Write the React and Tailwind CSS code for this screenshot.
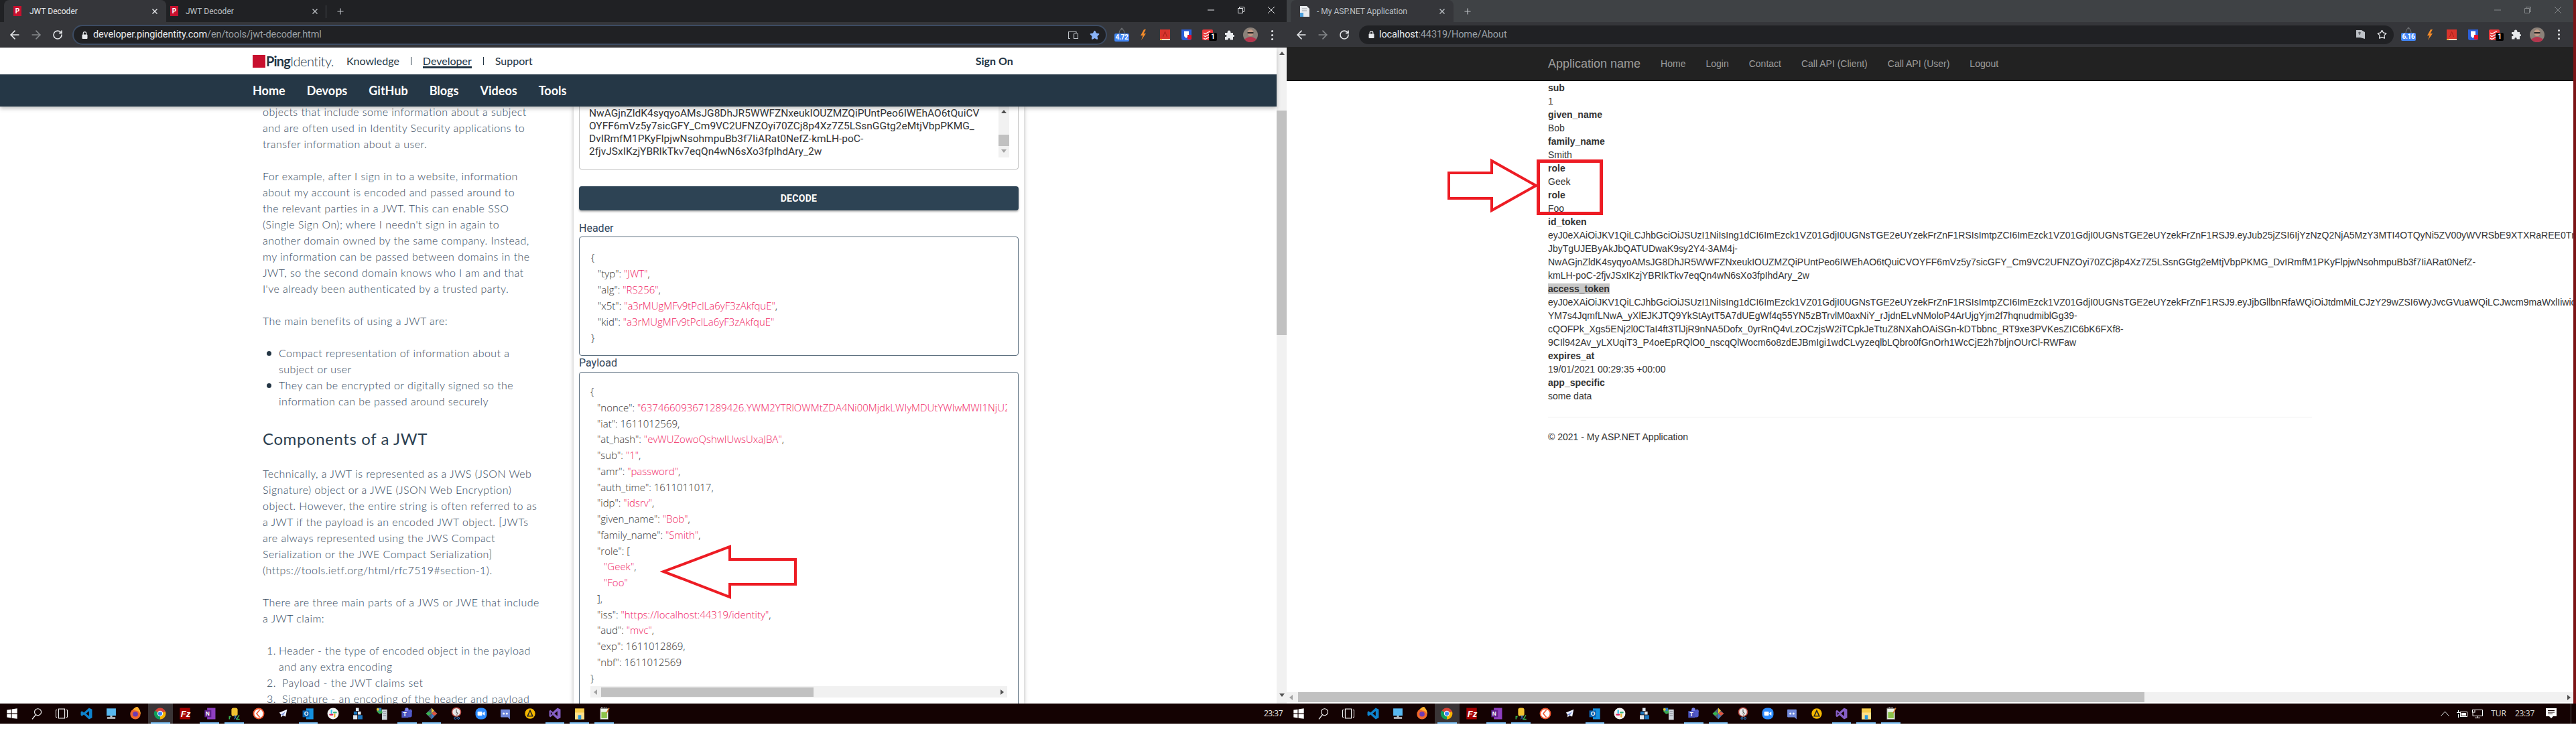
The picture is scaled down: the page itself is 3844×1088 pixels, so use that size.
import { ArrowLeft, ArrowRight, RotateCw, Star, Plus } from "lucide-react";

const bodyLines1 = [
  "objects that include some information about a subject",
  "and are often used in Identity Security applications to",
  "transfer information about a user.",
];
const bodyLines2 = [
  "For example, after I sign in to a website, information",
  "about my account is encoded and passed around to",
  "the relevant parties in a JWT. This can enable SSO",
  "(Single Sign On); where I needn't sign in again to",
  "another domain owned by the same company. Instead,",
  "my information can be passed between domains in the",
  "JWT, so the second domain knows who I am and that",
  "I've already been authenticated by a trusted party.",
];
const bodyLines3 = [
  "Technically, a JWT is represented as a JWS (JSON Web",
  "Signature) object or a JWE (JSON Web Encryption)",
  "object. However, the entire string is often referred to as",
  "a JWT if the payload is an encoded JWT object. [JWTs",
  "are always represented using the JWS Compact",
  "Serialization or the JWE Compact Serialization]",
  "(https://tools.ietf.org/html/rfc7519#section-1).",
];

const tokenLines = [
  "NwAGjnZldK4syqyoAMsJG8DhJR5WWFZNxeukIOUZMZQiPUntPeo6IWEhAO6tQuiCV",
  "OYFF6mVz5y7sicGFY_Cm9VC2UFNZOyi70ZCj8p4Xz7Z5LSsnGGtg2eMtjVbpPKMG_",
  "DvIRmfM1PKyFlpjwNsohmpuBb3f7IiARat0NefZ-kmLH-poC-",
  "2fjvJSxIKzjYBRIkTkv7eqQn4wN6sXo3fpIhdAry_2w",
];

const headerRows = [
  ["typ", "JWT", ","],
  ["alg", "RS256", ","],
  ["x5t", "a3rMUgMFv9tPclLa6yF3zAkfquE", ","],
  ["kid", "a3rMUgMFv9tPclLa6yF3zAkfquE", ""],
];

const idHead = "eyJ0eXAiOiJKV1QiLCJhbGciOiJSUzI1NiIsIng1dCI6ImEzck1VZ01GdjI0UGNsTGE2eUYzekFrZnF1RSIsImtpZCI6ImEzck1VZ01GdjI0UGNsTGE2eUYzekFrZnF1RSJ9.";

const profileRows = [
  ["sub", ["1"]],
  ["given_name", ["Bob"]],
  ["family_name", ["Smith"]],
  ["role", ["Geek"]],
  ["role", ["Foo"]],
  ["id_token", [
    idHead + "eyJub25jZSI6IjYzNzQ2NjA5MzY3MTI4OTQyNi5ZV00yWVRSbE9XTXRaREE0TmkwME1qZGtMV0l5TURVdFl6QXhOV01",
    "JbyTgUJEByAkJbQATUDwaK9sy2Y4-3AM4j-",
    "NwAGjnZldK4syqyoAMsJG8DhJR5WWFZNxeukIOUZMZQiPUntPeo6IWEhAO6tQuiCVOYFF6mVz5y7sicGFY_Cm9VC2UFNZOyi70ZCj8p4Xz7Z5LSsnGGtg2eMtjVbpPKMG_DvIRmfM1PKyFlpjwNsohmpuBb3f7IiARat0NefZ-",
    "kmLH-poC-2fjvJSxIKzjYBRIkTkv7eqQn4wN6sXo3fpIhdAry_2w",
  ]],
  ["access_token", [
    idHead + "eyJjbGllbnRfaWQiOiJtdmMiLCJzY29wZSI6WyJvcGVuaWQiLCJwcm9maWxlIiwicm9sZXMiLCJhcGkxIl0sInN1YiI6",
    "YM7s4JqmfLNwA_yXlEJKJTQ9YkStAytT5A7dUEgWf4q55YN5zBTrvlM0axNiY_rJjdnELvNMoloP4ArUjgYjm2f7hqnudmiblGg39-",
    "cQOFPk_Xgs5ENj2l0CTaI4ft3TlJjR9nNA5Dofx_0yrRnQ4vLzOCzjsW2iTCpkJeTtuZ8NXahOAiSGn-kDTbbnc_RT9xe3PVKesZIC6bK6FXf8-",
    "9CIl942Av_yLXUqiT3_P4oeEpRQlO0_nscqQlWocm6o8zdEJBmIgi1wdCLvyzeqlbLQbro0fGnOrh1WcCjE2h7bIjnOUrCl-RWFaw",
  ]],
  ["expires_at", ["19/01/2021 00:29:35 +00:00"]],
  ["app_specific", ["some data"]],
];

const Str = ({ children }) => <span className="text-[#f0225f]">"{children}"</span>;
const Key = ({ children }) => <span>"{children}": </span>;

function KV({ k, v, end = "," })
{
  return (
    <div className="pl-[10px]"><Key>{k}</Key>{typeof v === "number" ? v : <Str>{v}</Str>}{end}</div>
  );
}

function Favicon()
{
  return (
    <div className="w-[12px] h-[15px] bg-[#c8102e] flex items-center justify-center text-white text-[10px] font-bold [font-family:Roboto,sans-serif] shrink-0">P</div>
  );
}

function TabClose()
{
  return (
    <svg width="8" height="8" viewBox="0 0 8 8" className="shrink-0"><path d="M0.5 0.5 L7.5 7.5 M7.5 0.5 L0.5 7.5" stroke="currentColor" strokeWidth="1.4" /></svg>
  );
}

function WinControls({ dim })
{
  const c = dim ? "#85888b" : "#e8eaed";
  return (
    <div className="ml-auto flex items-center h-[30px] gap-[35px] pr-[18px]">
      <svg width="10" height="10" viewBox="0 0 10 10"><path d="M0 5 H10" stroke={c} strokeWidth="1" /></svg>
      <svg width="10" height="10" viewBox="0 0 10 10"><path d="M0.5 2.5 H7.5 V9.5 H0.5 Z M2.5 2.5 V0.5 H9.5 V7.5 H7.5" stroke={c} strokeWidth="1" fill="none" /></svg>
      <svg width="10" height="10" viewBox="0 0 10 10"><path d="M0 0 L10 10 M10 0 L0 10" stroke={c} strokeWidth="1" /></svg>
    </div>
  );
}

function LockIcon()
{
  return (
    <svg width="9" height="11" viewBox="0 0 9 11" className="shrink-0"><path d="M2.2 5 V3 a2.3 2.3 0 0 1 4.6 0 V5" stroke="#e8eaed" strokeWidth="1.2" fill="none" /><rect x="0.5" y="4.5" width="8" height="6.5" rx="1" fill="#e8eaed" /></svg>
  );
}

function Avatar()
{
  return (
    <svg width="22" height="22" viewBox="0 0 22 22">
      <circle cx="11" cy="11" r="11" fill="#8b8179" />
      <ellipse cx="11" cy="8" rx="4.5" ry="5" fill="#c49a86" />
      <rect x="6.5" y="7" width="9" height="2" fill="#222" />
      <path d="M2 18 Q11 10 20 18 Q16 22 11 22 Q6 22 2 18Z" fill="#b5354d" />
    </svg>
  );
}

function Extensions({ badge })
{
  return (
    <div className="flex items-center h-full w-[268px] pl-[6px] shrink-0">
      <div className="w-[32px] flex flex-col items-center">
        <svg width="14" height="9" viewBox="0 0 14 9" className="-mt-[2px]"><path d="M3 9 Q3.5 3 7 2 Q10.5 3 11 9" stroke="#6b6e72" strokeWidth="1.2" fill="none" /><circle cx="7" cy="2" r="1.5" fill="#6b6e72" /></svg>
        <div className="w-[22px] h-[12px] bg-[#4285f4] rounded-[2px] text-white text-[10px] leading-[12px] font-bold text-center [font-family:Roboto,sans-serif] tracking-[-0.3px]">{badge}</div>
      </div>
      <div className="w-[32px] flex justify-center">
        <svg width="10" height="16" viewBox="0 0 10 16"><path d="M6 0 L1 9 H4.5 L2 16 L9 6 H5.5 L9 0Z" fill="#f48b29" /></svg>
      </div>
      <div className="w-[32px] flex justify-center">
        <svg width="15" height="16" viewBox="0 0 15 16"><rect width="15" height="14" fill="#d8342c" /><rect y="14" width="15" height="2" fill="#f5d7c0" /><rect y="14" width="3" height="2" fill="#e8b93b" /><path d="M4.5 11 L7.5 3 L10.5 11" stroke="#a82018" strokeWidth="1" fill="none" /></svg>
      </div>
      <div className="w-[32px] flex justify-center">
        <svg width="15" height="16" viewBox="0 0 15 16"><path d="M0 0 H15 V13 Q15 16 12 16 H3 Q0 16 0 13Z" fill="#2b5fd9" /><path d="M4 2.5 H11 V9 L7 13 L4 10Z" fill="#fff" /><rect x="9" y="8" width="6" height="7" rx="1" fill="#e8112d" /></svg>
      </div>
      <div className="w-[32px] flex justify-center relative">
        <svg width="16" height="16" viewBox="0 0 16 16"><rect width="16" height="16" rx="2" fill="#e8383b" /><path d="M2 5 L4.5 6.5 L12 2.5 M2 9 L4.5 10.5 L12 6.5 M2 13 L4.5 14.5 L12 10.5" stroke="#fff" strokeWidth="1.4" fill="none" /></svg>
        <div className="absolute left-[18px] top-[5px] w-[12px] h-[12px] bg-black rounded-[2px] text-white text-[10px] leading-[12px] text-center font-bold [font-family:Roboto,sans-serif]">1</div>
      </div>
      <div className="w-[32px] flex justify-center">
        <svg width="15" height="15" viewBox="0 0 15 15"><path d="M1 4 H4.5 Q4.5 0.5 7 0.5 Q9.5 0.5 9.5 4 H13 V7 Q15 6.5 15 8.5 Q15 10.5 13 10 V14.5 H8.5 Q9 12 7 12 Q5 12 5.5 14.5 H1 V10 Q3.5 10.5 3.5 8.5 Q3.5 6.5 1 7Z" fill="#e8eaed" /></svg>
      </div>
      <div className="w-[32px] flex justify-center"><Avatar /></div>
      <div className="w-[32px] flex flex-col items-center gap-[3px]">
        <span className="w-[3px] h-[3px] rounded-full bg-[#e8eaed]" />
        <span className="w-[3px] h-[3px] rounded-full bg-[#e8eaed]" />
        <span className="w-[3px] h-[3px] rounded-full bg-[#e8eaed]" />
      </div>
    </div>
  );
}

function NavButtons()
{
  return (
    <div className="flex items-center pl-[6px] w-[108px] shrink-0 text-[#e8eaed]">
      <div className="w-[32px] flex justify-center"><ArrowLeft size={20} strokeWidth={2} /></div>
      <div className="w-[32px] flex justify-center text-[#85888b]"><ArrowRight size={20} strokeWidth={2} /></div>
      <div className="w-[32px] flex justify-center"><RotateCw size={16} strokeWidth={2.4} /></div>
    </div>
  );
}

function LeftWindow()
{
  return (
    <div className="w-[1920px] h-full flex flex-col shrink-0">
      <div className="h-[33px] bg-[#202124] flex items-start pl-[6px] text-[#e8eaed] [font-family:Roboto,sans-serif] text-[12px]">
        <div className="w-[242px] h-[33px] bg-[#35363a] rounded-t-[8px] flex items-center pl-[14px] pr-[13px]">
          <Favicon />
          <span className="ml-[12px] flex-1">JWT Decoder</span>
          <TabClose />
        </div>
        <div className="w-[238px] h-[33px] flex items-center pl-[6px] pr-[12px] text-[#bdc1c6]">
          <Favicon />
          <span className="ml-[11px] flex-1">JWT Decoder</span>
          <TabClose />
        </div>
        <span className="w-px h-[19px] mt-[8px] bg-[#4a4c50]" />
        <Plus size={14} className="ml-[14px] mt-[10px] text-[#bdc1c6]" />
        <WinControls />
      </div>
      <div className="h-[38px] bg-[#35363a] flex items-center">
        <NavButtons />
        <div className="flex-1 h-[30px] rounded-full bg-[#202124] border-2 border-[#3d4c63] flex items-center pl-[12px] pr-[9px] [font-family:Roboto,sans-serif] text-[14.5px] tracking-[-0.1px]">
          <LockIcon />
          <span className="ml-[8px] text-[#e8eaed]">developer.pingidentity.com</span>
          <span className="text-[#9aa0a6]">/en/tools/jwt-decoder.html</span>
          <svg width="15" height="11" viewBox="0 0 15 11" className="ml-auto mr-[17px]"><path d="M3 10.5 H0.5 V0.5 H12 V2 M8.5 3.5 H14.5 V10.5 H8.5Z" stroke="#bdc1c6" strokeWidth="1.2" fill="none" /></svg>
          <Star size={15} className="text-[#8ab4f8] fill-[#8ab4f8]" />
        </div>
        <Extensions badge="4.72" />
      </div>
      <div className="flex-1 flex min-h-0 bg-white">
        <div className="flex-1 flex flex-col min-w-0">
          <div className="relative z-10 shadow-[0_3px_6px_rgba(0,0,0,0.25)] [font-family:Lato,sans-serif]">
            <div className="h-[40px] bg-white flex items-center pl-[377px] text-[#233544] text-[16px]">
              <div className="w-[19px] h-[19px] bg-[#c8102e] shrink-0" />
              <span className="ml-px text-[20px] font-bold tracking-[-0.8px]">Ping</span>
              <span className="text-[20px] font-light tracking-[-0.5px]">Identity.</span>
              <span className="ml-[19px]">Knowledge</span>
              <span className="mx-[17px] w-px h-[12px] bg-[#233544]" />
              <span className="relative">Developer<span className="absolute left-0 right-0 top-[20px] h-[3px] bg-[#233544]" /></span>
              <span className="mx-[17px] w-px h-[12px] bg-[#233544]" />
              <span>Support</span>
              <span className="ml-[661px] font-bold">Sign On</span>
            </div>
            <div className="h-[48px] bg-[#253746] flex items-center pl-[377px] gap-[32px] text-white text-[18px] font-bold">
              <span>Home</span>
              <span>Devops</span>
              <span>GitHub</span>
              <span>Blogs</span>
              <span>Videos</span>
              <span>Tools</span>
            </div>
          </div>
          <div className="flex-1 flex min-h-0 overflow-hidden">
            <div className="ml-[392px] w-[464px] shrink-0 -mt-[4px] text-[#33475b] text-[16px] leading-[24px] font-light whitespace-nowrap [font-family:Lato,sans-serif] tracking-[0.45px]">
              {bodyLines1.map(l => <div key={l}>{l}</div>)}
              <div className="h-[24px]" />
              {bodyLines2.map(l => <div key={l}>{l}</div>)}
              <div className="h-[24px]" />
              <div>The main benefits of using a JWT are:</div>
              <div className="h-[24px]" />
              <ul className="pl-[24px]">
                <li className="relative"><span className="absolute -left-[18px] top-[9px] w-[7px] h-[7px] rounded-full bg-[#233544]" />Compact representation of information about a<br />subject or user</li>
                <li className="relative"><span className="absolute -left-[18px] top-[9px] w-[7px] h-[7px] rounded-full bg-[#233544]" />They can be encrypted or digitally signed so the<br />information can be passed around securely</li>
              </ul>
              <div className="mt-[24px] h-[40px] flex items-center text-[24px] font-normal text-[#2c4050] tracking-[0.6px]">Components of a JWT</div>
              <div className="h-[20px]" />
              {bodyLines3.map(l => <div key={l}>{l}</div>)}
              <div className="h-[24px]" />
              <div>There are three main parts of a JWS or JWE that include</div>
              <div>a JWT claim:</div>
              <div className="h-[24px]" />
              <ol className="pl-[24px]">
                <li className="relative"><span className="absolute -left-[18px]">1.</span>Header - the type of encoded object in the payload<br />and any extra encoding</li>
                <li className="relative"><span className="absolute -left-[18px]">2.</span><span className="pl-[5px]">Payload - the JWT claims set</span></li>
                <li className="relative"><span className="absolute -left-[18px]">3.</span><span className="pl-[5px]">Signature - an encoding of the header and payload</span></li>
              </ol>
            </div>
            <div className="w-[672px] shrink-0 px-[8px] bg-white shadow-[0_0_6px_rgba(0,0,0,0.3)] [font-family:Roboto,sans-serif]">
              <div className="h-[94px] border-x border-b border-[#c4c4c4] rounded-b-[4px] relative pl-[14px] pt-px text-[15.5px] leading-[19px] text-[#333] whitespace-nowrap">
                {tokenLines.map(l => <div key={l}>{l}</div>)}
                <div className="absolute right-[13px] top-0 w-[16px] h-[76px] bg-[#f1f1f1] flex flex-col items-center">
                  <span className="mt-[5px] w-0 h-0 border-x-[4px] border-x-transparent border-b-[5px] border-b-[#505050]" />
                  <span className="mt-[32px] w-full h-[17px] bg-[#c1c1c1]" />
                  <span className="mt-[5px] w-0 h-0 border-x-[4px] border-x-transparent border-t-[5px] border-t-[#a3a3a3]" />
                </div>
              </div>
              <div className="mt-[25px] h-[36px] rounded-[4px] bg-[#2d4354] shadow-[0_2px_3px_rgba(0,0,0,0.3)] flex items-center justify-center text-white text-[14px] font-bold tracking-[0.3px]">DECODE</div>
              <div className="mt-[15px] h-[24px] leading-[24px] text-[16px] text-[#33475b]">Header</div>
              <div className="h-[178px] border border-[#5c6f7f] rounded-[4px] pt-[18px] pl-[17px] text-[15px] leading-[24px] text-[#333] font-light [font-family:'Open_Sans',sans-serif]">
                <div>{"{"}</div>
                {headerRows.map(r => <KV key={r[0]} k={r[0]} v={r[1]} end={r[2]} />)}
                <div>{"}"}</div>
              </div>
              <div className="h-[24px] leading-[22px] text-[16px] text-[#33475b]">Payload</div>
              <div className="border border-[#5c6f7f] rounded-[4px] h-[520px] pt-[17px] px-[16px] text-[15px] leading-[23.75px] text-[#333] font-light [font-family:'Open_Sans',sans-serif]">
                <div className="overflow-hidden whitespace-nowrap">
                  <div>{"{"}</div>
                  <KV k="nonce" v="637466093671289426.YWM2YTRlOWMtZDA4Ni00MjdkLWIyMDUtYWIwMWI1NjU2" />
                  <KV k="iat" v={1611012569} />
                  <KV k="at_hash" v="evWUZowoQshwIUwsUxaJBA" />
                  <KV k="sub" v="1" />
                  <KV k="amr" v="password" />
                  <KV k="auth_time" v={1611011017} />
                  <KV k="idp" v="idsrv" />
                  <KV k="given_name" v="Bob" />
                  <KV k="family_name" v="Smith" />
                  <div className="pl-[10px]"><Key>role</Key>[</div>
                  <div className="pl-[20px]"><Str>Geek</Str>,</div>
                  <div className="pl-[20px]"><Str>Foo</Str></div>
                  <div className="pl-[10px]">],</div>
                  <KV k="iss" v="https://localhost:44319/identity" />
                  <KV k="aud" v="mvc" />
                  <KV k="exp" v={1611012869} />
                  <KV k="nbf" v={1611012569} end="" />
                  <div>{"}"}</div>
                </div>
                <div className="h-[17px] bg-[#f1f1f1] flex items-center">
                  <span className="ml-[5px] w-0 h-0 border-y-[4px] border-y-transparent border-r-[5px] border-r-[#a3a3a3]" />
                  <span className="ml-[6px] w-[317px] h-[14px] bg-[#c1c1c1]" />
                  <span className="ml-auto mr-[5px] w-0 h-0 border-y-[4px] border-y-transparent border-l-[5px] border-l-[#505050]" />
                </div>
              </div>
            </div>
          </div>
        </div>
        <div className="w-[15px] bg-[#f1f1f1] flex flex-col items-center shrink-0">
          <span className="mt-[6px] w-0 h-0 border-x-[4px] border-x-transparent border-b-[5px] border-b-[#505050]" />
          <span className="mt-[83px] w-full h-[335px] bg-[#c1c1c1]" />
          <span className="mt-auto mb-[10px] w-0 h-0 border-x-[4px] border-x-transparent border-t-[5px] border-t-[#505050]" />
        </div>
      </div>
    </div>
  );
}

function RightWindow()
{
  return (
    <div className="w-[1920px] h-full flex flex-col shrink-0">
      <div className="h-[33px] bg-[#3f4245] flex items-start pl-[6px] text-[#bdc1c6] [font-family:Roboto,sans-serif] text-[12px]">
        <div className="w-[243px] h-[33px] bg-[#35363a] rounded-t-[8px] flex items-center pl-[13px] pr-[13px]">
          <svg width="16" height="16" viewBox="0 0 16 16" className="shrink-0"><path d="M1 0 H11 L15 4 V16 H1Z" fill="#e8eaed" /><path d="M1 10 H6 V16 H1Z" fill="#4a9edb" /><path d="M4 4 H11 M4 7 H11" stroke="#9aa0a6" /></svg>
          <span className="ml-[10px] flex-1">- My ASP.NET Application</span>
          <TabClose />
        </div>
        <Plus size={14} className="ml-[14px] mt-[10px] text-[#bdc1c6]" />
        <WinControls dim />
      </div>
      <div className="h-[37px] bg-[#35363a] flex items-center">
        <NavButtons />
        <div className="flex-1 h-[28px] rounded-full bg-[#202124] flex items-center pl-[14px] pr-[10px] [font-family:Roboto,sans-serif] text-[14.5px] tracking-[-0.1px]">
          <LockIcon />
          <span className="ml-[7px] text-[#e8eaed]">localhost</span>
          <span className="text-[#9aa0a6]">:44319/Home/About</span>
          <svg width="14" height="13" viewBox="0 0 14 13" className="ml-auto mr-[17px]"><path d="M0 0 H8 L13 3 V13 L6 11 H0Z" fill="#bdc1c6" /><path d="M3 4 H7 M5 2.5 V7" stroke="#35363a" /></svg>
          <Star size={15} className="text-[#e8eaed]" />
        </div>
        <Extensions badge="6.16" />
      </div>
      <div className="flex-1 flex flex-col min-h-0 bg-white [font-family:'Liberation_Sans',sans-serif]">
        <div className="h-[51px] bg-[#222] border-b border-black flex items-center pl-[390px] text-[#9d9d9d] text-[14px] shrink-0">
          <span className="text-[18px] mr-[15px]">Application name</span>
          <span className="px-[15px]">Home</span>
          <span className="px-[15px]">Login</span>
          <span className="px-[15px]">Contact</span>
          <span className="px-[15px]">Call API (Client)</span>
          <span className="px-[15px]">Call API (User)</span>
          <span className="px-[15px]">Logout</span>
        </div>
        <div className="flex-1 min-h-0 overflow-hidden pl-[390px] text-[14px] leading-[20px] text-[#333] whitespace-nowrap">
          {profileRows.map(([name, values], i) => (
            <div key={i}>
              <div className="font-bold"><span className={name === "access_token" ? "bg-[#c8c8c8]" : ""}>{name}</span></div>
              {values.map(v => <div key={v}>{v}</div>)}
            </div>
          ))}
          <div className="mt-[21px] w-[1140px] border-t border-[#eee]" />
          <div className="mt-[19px]">© 2021 - My ASP.NET Application</div>
        </div>
        <div className="h-[15px] bg-[#f1f1f1] flex items-center shrink-0">
          <span className="ml-[4px] w-0 h-0 border-y-[4px] border-y-transparent border-r-[5px] border-r-[#a3a3a3]" />
          <span className="ml-[8px] w-[1263px] h-full bg-[#c1c1c1]" />
          <span className="ml-auto mr-[4px] w-0 h-0 border-y-[4px] border-y-transparent border-l-[5px] border-l-[#505050]" />
        </div>
        <div className="h-[2px] bg-white shrink-0" />
      </div>
    </div>
  );
}

const S = ({ children }) => <svg width="20" height="20" viewBox="0 0 26 26">{children}</svg>;

const taskIcons = [
  <S key="win"><path d="M3 6 L11 4.8 V12.5 H3Z M12.5 4.6 L23 3 V12.5 H12.5Z M3 14 H11 V21.5 L3 20.3Z M12.5 14 H23 V23 L12.5 21.7Z" fill="#fff" /></S>,
  <S key="search"><circle cx="15" cy="10" r="6.5" stroke="#fff" strokeWidth="1.4" fill="none" /><path d="M11 15 L4 24" stroke="#fff" strokeWidth="1.6" /></S>,
  <S key="task"><rect x="7" y="4" width="12" height="18" stroke="#fff" strokeWidth="1.4" fill="none" /><path d="M4 6 H2 V20 H4 M22 6 H24 V20 H22" stroke="#fff" strokeWidth="1.3" fill="none" /></S>,
  <S key="code"><path d="M18 2 L24 5 V21 L18 24 L8 15 L4 18 L2 16 V10 L4 8 L8 11Z M18 8 L12 13 L18 18Z" fill="#0e83cd" fillRule="evenodd" /></S>,
  <S key="pc"><rect x="4" y="3" width="18" height="14" fill="#58b8f0" /><rect x="11" y="17" width="4" height="3" fill="#b9c4cc" /><rect x="5" y="20" width="16" height="3" fill="#d8dee3" /></S>,
  <S key="firefox"><circle cx="13" cy="14" r="10" fill="#f0672b" /><path d="M8 5 Q16 -3 19 2 Q24 8 23 14 Q20 7 14 7Z" fill="#ffb02e" /><circle cx="13" cy="14" r="5" fill="#6e3bb5" /></S>,
  <S key="chrome"><circle cx="13" cy="13" r="11" fill="#db4437" /><path d="M13 13 L3 7 A11 11 0 0 0 13 24Z" fill="#0f9d58" /><path d="M13 13 L23 9 A11 11 0 0 1 13 24Z" fill="#f4b400" /><circle cx="13" cy="13" r="5.4" fill="#fff" /><circle cx="13" cy="13" r="4" fill="#4285f4" /></S>,
  <S key="fz"><rect x="3" y="2" width="20" height="22" fill="#a80000" /><text x="5" y="20" fontSize="17" fontWeight="700" fontStyle="italic" fill="#fff" fontFamily="Liberation Sans">Fz</text></S>,
  <S key="one"><rect x="8" y="2" width="16" height="22" fill="#8f3fc0" /><rect x="3" y="6" width="13" height="14" fill="#5e1f8c" /><text x="5" y="17" fontSize="11" fontWeight="700" fill="#fff" fontFamily="Liberation Sans">N</text></S>,
  <S key="cap"><rect x="7" y="2" width="12" height="16" rx="4" fill="#f2c230" /><path d="M3 24 V19 H6 M23 24 H17 L22 16" stroke="#37b24d" strokeWidth="2" fill="none" /><path d="M12 16 L17 24 M17 16 L12 24" stroke="#2e6fb7" strokeWidth="1.5" /></S>,
  <S key="git"><circle cx="13" cy="13" r="11" fill="#f0562e" /><circle cx="13" cy="13" r="8.5" fill="#fff" /><path d="M15 6 L9 13 L15 20" stroke="#f0562e" strokeWidth="2" fill="none" /></S>,
  <S key="mail"><path d="M5 11 L20 5 L17 19 L12 17 L8 20 L8 15Z" fill="#eef2ff" /><path d="M8 15 L17 9 L12 17" fill="#7b8fd6" /></S>,
  <S key="out"><rect x="9" y="3" width="14" height="21" fill="#1490df" /><rect x="2" y="7" width="13" height="13" fill="#0a5ea8" /><text x="5" y="17.5" fontSize="11" fontWeight="700" fill="#fff" fontFamily="Liberation Sans">O</text></S>,
  <S key="slack"><circle cx="13" cy="13" r="11" fill="#f4f4f4" /><path d="M10 7 V12" stroke="#36c5f0" strokeWidth="3" strokeLinecap="round" /><path d="M14.5 11 H19" stroke="#2eb67d" strokeWidth="3" strokeLinecap="round" /><path d="M16 14.5 V19" stroke="#ecb22e" strokeWidth="3" strokeLinecap="round" /><path d="M7 15 H12" stroke="#e01e5a" strokeWidth="3" strokeLinecap="round" /></S>,
  <S key="blocks"><rect x="9" y="2" width="6" height="6" fill="#dfe7ee" /><rect x="5" y="9" width="7" height="6" fill="#1c75bc" /><rect x="13" y="9" width="6" height="6" fill="#dfe7ee" /><rect x="4" y="16" width="8" height="8" fill="#dfe7ee" /><rect x="13" y="16" width="9" height="8" fill="#1c75bc" /></S>,
  <S key="srv"><rect x="13" y="5" width="10" height="20" fill="#cfd6dc" /><path d="M15 9 H21 M15 13 H21 M15 17 H21" stroke="#667" /><path d="M3 2 L12 3 L14 12 L8 14 L3 9Z" fill="#3aa655" /><path d="M6 2 L12 2 L11 8 L6 7Z" fill="#2e7dd1" /><circle cx="5" cy="5" r="2.5" fill="#f2c230" /></S>,
  <S key="teams"><circle cx="20" cy="8" r="3" fill="#7b83eb" /><rect x="8" y="6" width="15" height="14" rx="3" fill="#5059c9" /><circle cx="13" cy="5" r="3.5" fill="#7b83eb" /><rect x="3" y="8" width="13" height="13" fill="#4b53bc" /><text x="6" y="18.5" fontSize="11" fontWeight="700" fill="#fff" fontFamily="Liberation Sans">T</text></S>,
  <S key="kraken"><path d="M13 2 L24 13 L13 24 L2 13Z" fill="#4e5d78" /><path d="M13 2 L18 7 L13 13Z" fill="#f2c230" /><path d="M2 13 L7 9 L13 13 L7 17Z" fill="#37b24d" /><path d="M24 13 L18 17 L13 13 L18 9Z" fill="#e0533d" /><path d="M13 13 L18 18 L13 24Z" fill="#3d7dca" /></S>,
  <S key="snip"><circle cx="13" cy="10" r="8.5" fill="#e8e8e8" stroke="#b7463f" strokeWidth="2" /><path d="M13 5 V10 L16 13" stroke="#555" strokeWidth="1.4" fill="none" /><circle cx="11" cy="22" r="2" stroke="#2e7dd1" strokeWidth="1.3" fill="none" /><circle cx="17" cy="22" r="2" stroke="#2e7dd1" strokeWidth="1.3" fill="none" /><path d="M12 20 L16 12 M16 20 L12 12" stroke="#888" /></S>,
  <S key="zoom"><rect x="2" y="2" width="22" height="22" rx="9" fill="#2d8cff" /><rect x="6" y="9" width="9" height="8" rx="1.5" fill="#fff" /><path d="M16 12 L20 9 V17 L16 14Z" fill="#fff" /></S>,
  <S key="disc"><path d="M5 5 H21 Q22 5 22 6 V24 L18 20 H5 Q4 20 4 19 V6 Q4 5 5 5Z" fill="#7289da" /><circle cx="10" cy="13" r="2" fill="#fff" /><circle cx="16" cy="13" r="2" fill="#fff" /></S>,
  <S key="amd"><circle cx="13" cy="13" r="10" fill="#f5b700" /><path d="M13 7 L18 18 H8Z" stroke="#222" strokeWidth="2" fill="none" /></S>,
  <S key="vs"><path d="M18 2 L24 5 V21 L18 24 L9 16 L4 20 L2 18 V8 L4 6 L9 10Z M18 8 L12 13 L18 18Z M5 10 V16 L8 13Z" fill="#865fc5" fillRule="evenodd" /></S>,
  <S key="folder"><path d="M4 3 H22 V24 H4Z" fill="#f7cc4a" /><path d="M4 11 H22 V24 H4Z" fill="#ffe08a" /><rect x="10" y="16" width="6" height="8" fill="#2b9be0" /></S>,
  <S key="note"><rect x="5" y="3" width="15" height="21" fill="#eef3ea" stroke="#777" /><rect x="7" y="10" width="11" height="12" fill="#8bc34a" /><path d="M7 3 V0 M10 3 V0 M13 3 V0 M16 3 V0" stroke="#ccc" /><path d="M22 2 L17 12" stroke="#d9772b" strokeWidth="2" /></S>,
];

const activeBars = [7, 9, 10, 13, 17, 18, 23, 24, 25];

function TaskIcons()
{
  return (
    <div className="flex h-full">
      {taskIcons.map((icon, i) => (
        <div key={i} className={"w-[36.8px] h-full relative flex items-center justify-center " + (i === 6 ? "bg-[#3a3436]" : "")}>
          {icon}
          {activeBars.includes(i + 1) && <span className="absolute left-[4px] right-[4px] bottom-0 h-[2px] bg-[#76b9ed]" />}
        </div>
      ))}
    </div>
  );
}

export default function App()
{
  return (
    <div className="relative w-[3844px] h-[1088px] flex flex-col bg-white overflow-hidden">
      <div className="h-[1050px] flex">
        <LeftWindow />
        <RightWindow />
        <div className="w-[4px] bg-[#7b1416]" />
      </div>
      <div className="h-[30px] bg-[#140202] flex text-white [font-family:'Open_Sans',sans-serif] text-[12px]">
        <div className="w-[1920px] flex justify-between pr-[6px] shrink-0">
          <TaskIcons />
          <div className="flex items-center text-[#eee] tracking-[-0.5px]">23:37</div>
        </div>
        <div className="flex-1 flex">
          <TaskIcons />
          <div className="ml-auto flex items-center pr-[7px] text-[#ddd]">
            <svg width="13" height="8" viewBox="0 0 13 8"><path d="M0.5 7.5 L6.5 1 L12.5 7.5" stroke="#ddd" strokeWidth="1" fill="none" /></svg>
            <svg width="16" height="11" viewBox="0 0 16 11" className="ml-[11px]"><rect x="5.5" y="2.5" width="10" height="7" stroke="#fff" fill="none" /><rect x="7" y="4" width="7" height="4" fill="#fff" /><path d="M0 3.5 H5 M2.5 0 V3.5 M2.5 6 V11" stroke="#fff" /></svg>
            <svg width="16" height="13" viewBox="0 0 16 13" className="ml-[7px]"><path d="M4 0.5 H15.5 V9.5 H1 V4 M8 9.5 V12 M4 12.5 H12" stroke="#fff" fill="none" /><rect x="0.5" y="0.5" width="3.5" height="3.5" stroke="#fff" fill="#140202" /></svg>
            <span className="ml-[12px]">TUR</span>
            <span className="ml-[13px] tracking-[-0.3px]">23:37</span>
            <svg width="16" height="16" viewBox="0 0 16 16" className="ml-[17px]"><path d="M0 0 H16 V12 H11 L8 15 L5 12 H0Z" fill="#fff" /><path d="M3 3.5 H13 M3 6 H13 M3 8.5 H10" stroke="#140202" /></svg>
            <span className="ml-[21px] w-px h-full bg-[#555]" />
          </div>
        </div>
      </div>

      {/* red annotations drawn over the screenshot */}
      <svg className="absolute left-[985px] top-[810px]" width="206" height="86" viewBox="985 810 206 86">
        <polygon points="990,853 1089,816 1089,835 1187,835 1187,872 1089,872 1089,891" fill="none" stroke="#ed1c24" strokeWidth="4" />
      </svg>
      <svg className="absolute left-[2158px] top-[236px]" width="138" height="82" viewBox="2158 236 138 82">
        <polygon points="2292,277 2226,240 2226,258 2162,258 2162,296 2226,296 2226,314" fill="none" stroke="#ed1c24" strokeWidth="4" />
      </svg>
      <div className="absolute left-[2293px] top-[238px] w-[99px] h-[83px] border-[5px] border-[#ed1c24]" />
    </div>
  );
}
